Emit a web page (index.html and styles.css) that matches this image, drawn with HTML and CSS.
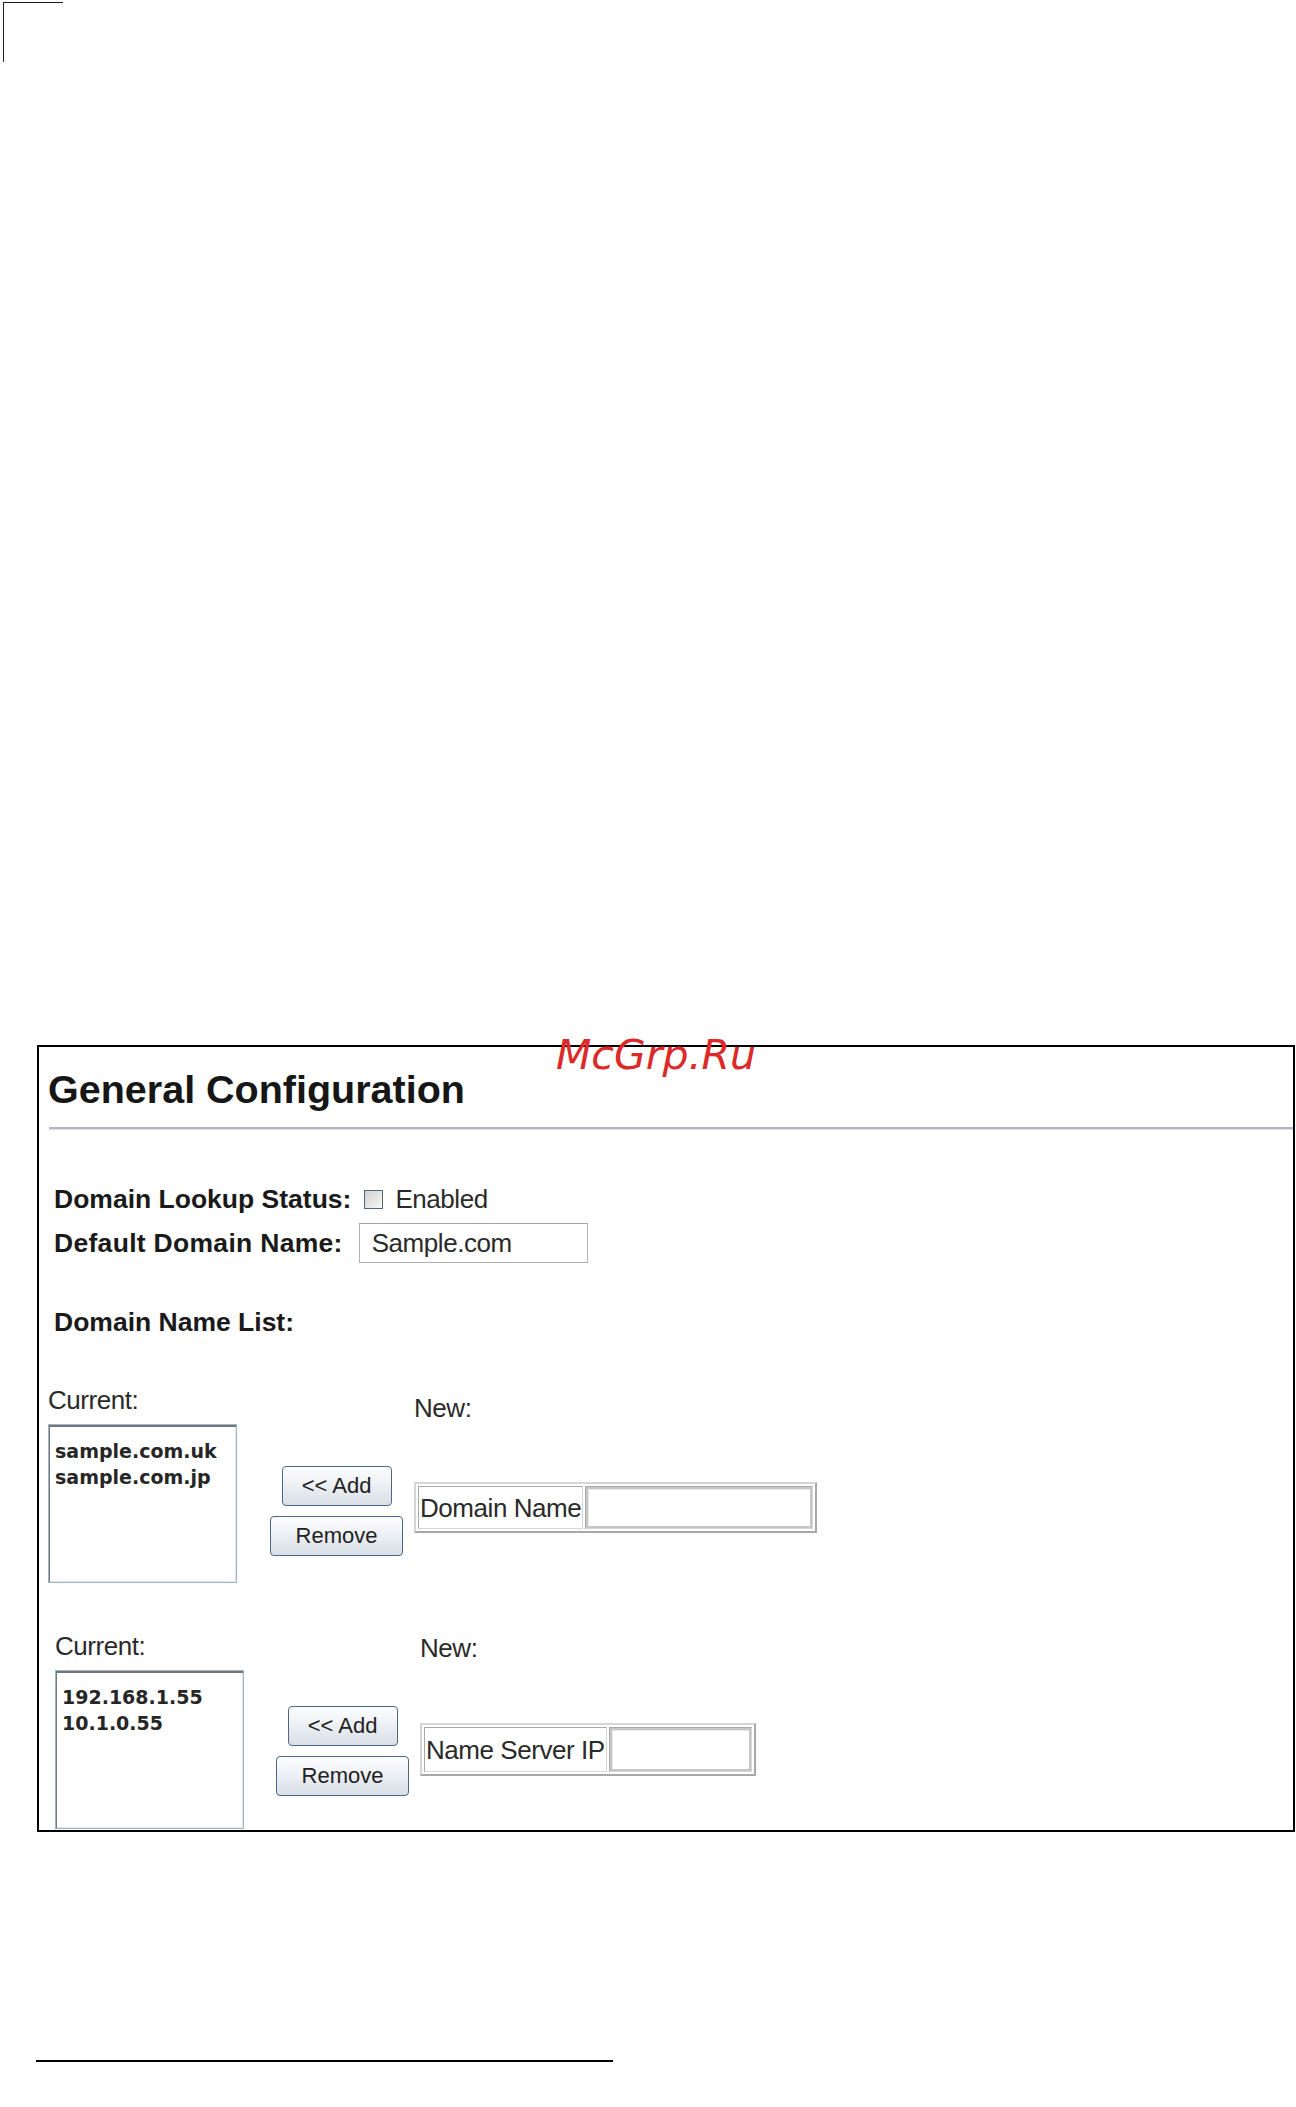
FILE: index.html
```html
<!DOCTYPE html>
<html lang="en">
<head>
<meta charset="utf-8">
<title>General Configuration</title>
<link rel="stylesheet" href="styles.css">
</head>
<body>
<div class="crop-mark"></div>

<div class="frame">
  <span class="watermark">McGrp.Ru</span>
  <h1 class="title">General Configuration</h1>
  <div class="rule"></div>

  <div class="field-row row-lookup">
    <span class="field-label">Domain Lookup Status:</span>
    <input type="checkbox" class="check">
    <span class="check-text">Enabled</span>
  </div>
  <div class="field-row row-default">
    <span class="field-label">Default Domain Name:</span>
    <input type="text" class="text-input" value="Sample.com">
  </div>
  <div class="list-title">Domain Name List:</div>

  <div class="list-section sec-domain">
    <div class="col-current">
      <div class="plain">Current:</div>
      <div class="listbox">
        <div class="list-item">sample.com.uk</div>
        <div class="list-item">sample.com.jp</div>
      </div>
    </div>
    <div class="col-buttons">
      <button class="btn btn-add">&lt;&lt; Add</button>
      <button class="btn btn-remove">Remove</button>
    </div>
    <div class="col-new">
      <div class="plain">New:</div>
      <table class="new-table">
        <tr>
          <td class="new-label">Domain Name</td>
          <td class="new-cell"><input type="text" class="new-input input-domain"></td>
        </tr>
      </table>
    </div>
  </div>

  <div class="list-section sec-ns">
    <div class="col-current">
      <div class="plain">Current:</div>
      <div class="listbox">
        <div class="list-item">192.168.1.55</div>
        <div class="list-item">10.1.0.55</div>
      </div>
    </div>
    <div class="col-buttons">
      <button class="btn btn-add">&lt;&lt; Add</button>
      <button class="btn btn-remove">Remove</button>
    </div>
    <div class="col-new">
      <div class="plain">New:</div>
      <table class="new-table">
        <tr>
          <td class="new-label">Name Server IP</td>
          <td class="new-cell"><input type="text" class="new-input input-ns"></td>
        </tr>
      </table>
    </div>
  </div>
</div>

<div class="bottom-rule"></div>
</body>
</html>
```

FILE: styles.css
```css
html, body {
  margin: 0;
  padding: 0;
  background: #ffffff;
}

body {
  width: 1296px;
  font-family: "Liberation Sans", Arial, sans-serif;
  color: #1e1e1e;
}

.crop-mark {
  margin: 2px 0 0 3px;
  width: 60px;
  height: 60px;
  box-sizing: border-box;
  border-top: 1px solid #231f20;
  border-left: 1px solid #231f20;
}

.frame {
  position: relative;
  margin: 983px 0 0 37px;
  width: 1258px;
  box-sizing: border-box;
  border: 2px solid #000000;
  padding-bottom: 1px;
}

.watermark {
  position: absolute;
  left: 517px;
  top: -12px;
  font-family: "DejaVu Sans", Verdana, sans-serif;
  font-style: italic;
  font-size: 41px;
  line-height: 41px;
  color: #dc2a2a;
  white-space: nowrap;
}

.title {
  margin: 20px 0 0 9px;
  font-family: "Liberation Sans", Arial, sans-serif;
  font-weight: bold;
  font-size: 39.5px;
  line-height: 44px;
  color: #161616;
}

.rule {
  margin: 16px 0 0 10px;
  height: 0;
  border-top: 2px solid #b5b6be;
  border-bottom: 1px solid #dedee4;
}

.field-row {
  display: flex;
  align-items: center;
  padding-left: 15px;
}

.row-lookup {
  margin-top: 52px;
  height: 34px;
}

.row-default {
  margin-top: 7px;
  height: 40px;
}

.field-label,
.list-title {
  font-family: "Liberation Sans", Arial, sans-serif;
  font-weight: bold;
  font-size: 26.5px;
  line-height: 34px;
  color: #1a1a1a;
  white-space: nowrap;
}

.row-default .field-label {
  letter-spacing: 0.3px;
}

.list-title {
  margin-top: 42px;
  padding-left: 15px;
}

.check {
  appearance: none;
  -webkit-appearance: none;
  margin: 0 12px 0 13px;
  width: 19px;
  height: 19px;
  box-sizing: border-box;
  border: 1px solid #55677a;
  background: linear-gradient(135deg, #d0d0d0, #f8f8f8);
}

.check-text,
.plain,
.text-input,
.new-label {
  font-family: "Liberation Sans", Arial, sans-serif;
  font-size: 26px;
  letter-spacing: -0.45px;
  line-height: 34px;
  color: #2a2a2a;
}

.text-input {
  margin: 0 0 0 16px;
  width: 229px;
  height: 40px;
  box-sizing: border-box;
  padding: 0 0 0 12px;
  border: 1px solid #b2b2b2;
  border-top-color: #a4a4a4;
  background: #ffffff;
  outline: none;
}

.list-section {
  display: flex;
  align-items: flex-start;
}

.sec-domain {
  margin-top: 44px;
  padding-left: 9px;
}

.sec-ns {
  margin-top: 46px;
  padding-left: 16px;
}

.col-current {
  display: flex;
  flex-direction: column;
}

.listbox {
  width: 189px;
  height: 159px;
  box-sizing: border-box;
  border: 1px solid #9fb6ca;
  box-shadow: inset 1px 2px 0 #767676, inset -1px -1px 0 #e6e6e6;
  padding: 13px 6px 0 6px;
  background: #ffffff;
}

.sec-domain .listbox {
  margin-top: 7px;
}

.sec-ns .listbox {
  margin-top: 7px;
}

.list-item {
  font-family: "DejaVu Sans", Verdana, sans-serif;
  font-weight: bold;
  font-size: 19px;
  line-height: 26px;
  color: #262626;
  white-space: nowrap;
}

.col-buttons {
  display: flex;
  flex-direction: column;
  align-items: center;
  gap: 10px;
  width: 133px;
}

.sec-domain .col-buttons {
  margin-left: 33px;
  padding-top: 83px;
}

.sec-ns .col-buttons {
  margin-left: 32px;
  padding-top: 77px;
}

.btn {
  margin: 0;
  height: 40px;
  box-sizing: border-box;
  padding: 0;
  border: 1px solid #4a6884;
  border-radius: 4px;
  background: linear-gradient(#fdfdfe 0%, #eef1f5 45%, #d8dfe7 100%);
  font-family: "Liberation Sans", Arial, sans-serif;
  font-size: 22px;
  color: #222222;
}

.btn-add {
  width: 110px;
}

.btn-remove {
  width: 133px;
}

.col-new {
  display: flex;
  flex-direction: column;
  align-items: flex-start;
  margin-left: 11px;
}

.sec-domain .col-new {
  padding-top: 8px;
}

.sec-ns .col-new {
  padding-top: 2px;
}

.new-table {
  margin-top: 57px;
  border-collapse: separate;
  border-spacing: 2px;
  border: 2px solid;
  border-color: #d6d6d6 #a8a8a8 #a8a8a8 #d6d6d6;
}

.sec-ns .new-table {
  margin-top: 58px;
}

.new-table td {
  padding: 0;
  border: 1px solid;
  border-color: #a8a8a8 #d6d6d6 #d6d6d6 #a8a8a8;
  vertical-align: middle;
}

.new-label {
  padding: 0 1px !important;
  white-space: nowrap;
}

.new-input {
  display: block;
  margin: 0;
  height: 41px;
  box-sizing: border-box;
  padding: 0 4px;
  border: 2px solid #c6c6c6;
  box-shadow: inset 1px 1px 0 #e8e8e8;
  background: #ffffff;
  outline: none;
}

.sec-ns .new-input {
  height: 43px;
}

.input-domain {
  width: 226px;
}

.input-ns {
  width: 141px;
}

.bottom-rule {
  margin: 228px 0 0 36px;
  width: 577px;
  height: 2px;
  background: #000000;
}
```
